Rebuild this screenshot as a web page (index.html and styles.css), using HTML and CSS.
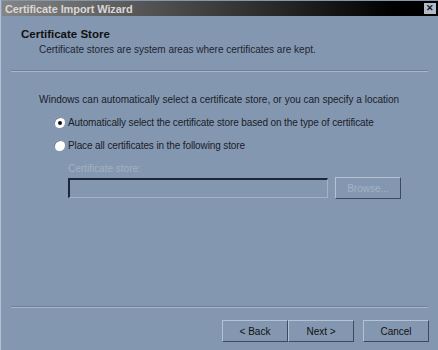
FILE: index.html
```html
<!DOCTYPE html>
<html lang="en">
<head>
    <meta charset="UTF-8">
    <title>Certificate Import Wizard</title>
    <link rel="stylesheet" href="styles.css">
</head>
<body>

<div class="window">
    <div class="titlebar">
        <span class="title">Certificate Import Wizard</span>
        <span class="close">&#10005;</span>
    </div>

    <div class="header">
        <h2>Certificate Store</h2>
        <p>Certificate stores are system areas where certificates are kept.</p>
    </div>
    <div class="sep"></div>

    <div class="content">
        <p class="intro">Windows can automatically select a certificate store, or you can specify a location</p>

        <label class="option">
            <span class="radio checked"></span>
            Automatically select the certificate store based on the type of certificate
        </label>
        <label class="option">
            <span class="radio"></span>
            Place all certificates in the following store
        </label>

        <div class="store">
            <div class="store-label">Certificate store:</div>
            <div class="store-row">
                <div class="store-box"></div>
                <button class="btn disabled">Browse...</button>
            </div>
        </div>
    </div>

    <div class="sep"></div>
    <div class="footer">
        <button class="btn">&lt; Back</button>
        <button class="btn next">Next &gt;</button>
        <button class="btn cancel">Cancel</button>
    </div>
</div>

</body>
</html>
```

FILE: styles.css
```css
body {
    margin: 0;
    padding: 0;
    font-family: "Liberation Sans", Arial, sans-serif;
    font-size: 10px;
    background-color: #8497b0;
}
.window {
    width: 438px;
    height: 350px;
    box-sizing: border-box;
    border-left: 1px solid #b4c1d2;
    background-color: #8497b0;
    display: flex;
    flex-direction: column;
    white-space: nowrap;
}
.titlebar {
    height: 15px;
    flex-shrink: 0;
    margin: 1px 0 0 1px;
    background: linear-gradient(to right, #858585, #000000 90%);
    display: flex;
    align-items: center;
    justify-content: space-between;
    padding: 0 2px 0 3px;
}
.title {
    color: #d8d8d8;
    font-size: 11px;
    font-weight: bold;
    letter-spacing: -0.1px;
}
.close {
    width: 12px;
    height: 11px;
    background-color: #b0bccc;
    color: #111;
    font-size: 9px;
    font-weight: bold;
    line-height: 11px;
    text-align: center;
}
.header {
    padding: 12px 0 0 20px;
    height: 43px;
    box-sizing: border-box;
    flex-shrink: 0;
}
.header h2 {
    margin: 0;
    font-size: 11.5px;
    color: #111;
}
.header p {
    margin: 4px 0 0 18px;
    color: #1e2530;
}
.sep {
    margin: 11px 10px 0 10px;
    height: 1px;
    flex-shrink: 0;
    background-color: #6f8199;
    border-bottom: 1px solid #a9b6c8;
}
.content {
    padding: 21px 0 0 38px;
    height: 223px;
    box-sizing: border-box;
    flex-shrink: 0;
    color: #1a2029;
}
.intro {
    margin: 0 0 10px 0;
    line-height: 13px;
}
.option {
    display: flex;
    align-items: center;
    margin: 0 0 10px 15px;
    height: 13px;
    letter-spacing: -0.12px;
}
.radio {
    width: 11px;
    height: 11px;
    border-radius: 50%;
    background-color: #ffffff;
    box-shadow: inset 1px 1px 0 #6a7a90;
    margin-right: 3px;
    display: flex;
    align-items: center;
    justify-content: center;
}
.radio.checked::after {
    content: "";
    width: 4px;
    height: 4px;
    border-radius: 50%;
    background-color: #111;
}
.store {
    margin-left: 29px;
}
.store-label {
    color: #a3b0c2;
    margin-bottom: 2px;
    line-height: 13px;
}
.store-row {
    display: flex;
    align-items: center;
}
.store-box {
    width: 257px;
    height: 17px;
    border-top: 2px solid #1c2636;
    border-left: 2px solid #1c2636;
    border-right: 1px solid #a4b2c4;
    border-bottom: 1px solid #a4b2c4;
    margin-right: 7px;
}
.btn {
    width: 66px;
    height: 22px;
    box-sizing: border-box;
    background-color: #8497b0;
    border: 1px solid;
    border-color: #b5c2d3 #3e4b5c #3e4b5c #b5c2d3;
    font-family: "Liberation Sans", Arial, sans-serif;
    font-size: 10px;
    color: #111;
    padding: 0;
}
.btn.disabled {
    color: #a5b2c4;
}
.footer {
    display: flex;
    justify-content: flex-end;
    padding: 12px 9px 0 0;
}
.btn.cancel {
    margin-left: 9px;
}
```
